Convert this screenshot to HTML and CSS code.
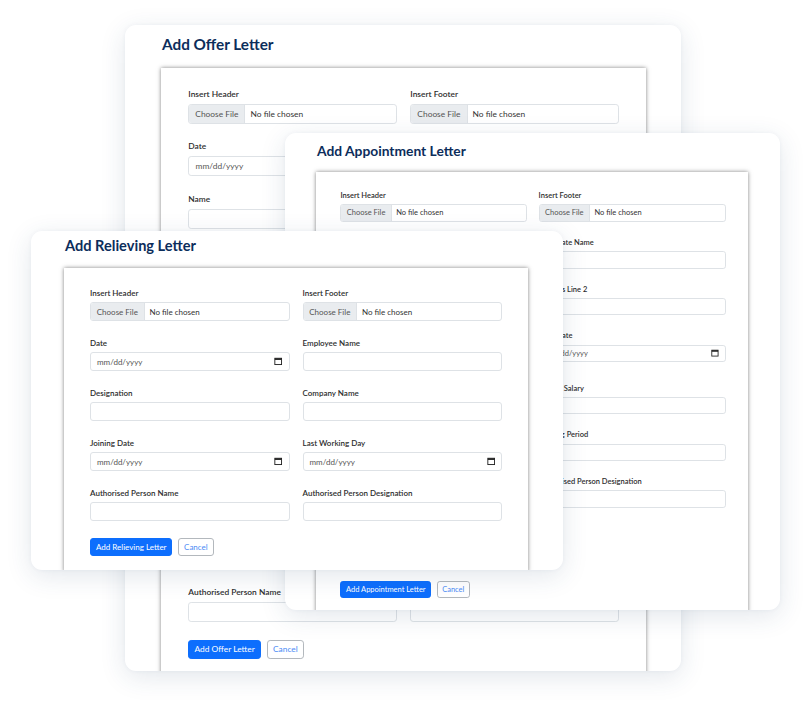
FILE: index.html
```html
<!DOCTYPE html>
<html lang="en">
<head>
<meta charset="utf-8">
<title>Letters</title>
<link rel="stylesheet" href="styles.css">
</head>
<body>
<div class="canvas">

  <section class="card card-offer">
    <h2 class="card-title">Add Offer Letter</h2>
    <div class="sheet">
      <div class="grid">
        <div class="field"><label>Insert Header</label><div class="control file"><span class="file-btn">Choose File</span><span class="file-name">No file chosen</span></div></div>
        <div class="field"><label>Insert Footer</label><div class="control file"><span class="file-btn">Choose File</span><span class="file-name">No file chosen</span></div></div>
        <div class="field"><label>Date</label><div class="control date"><span class="ph">mm/dd/yyyy</span><svg class="cal" viewBox="0 0 10 10"><rect x="1" y="1.5" width="8" height="7.5" fill="none" stroke="#222" stroke-width="1.1"/><rect x="1" y="1.5" width="8" height="2" fill="#222"/></svg></div></div>
        <div class="field"><label>Candidate Name</label><div class="control"></div></div>
        <div class="field"><label>Name</label><div class="control"></div></div>
        <div class="field"><label>Designation</label><div class="control"></div></div>
        <div class="field"><label>Address</label><div class="control area"></div></div>
        <div class="field"><label>Department</label><div class="control"></div></div>
        <div class="field"><label>Joining Date</label><div class="control"></div></div>
        <div class="field"><label>Salary</label><div class="control"></div></div>
        <div class="field"><label>Probation Period</label><div class="control"></div></div>
        <div class="field"><label>Notice Period</label><div class="control"></div></div>
        <div class="field"><label>Working Hours</label><div class="control"></div></div>
        <div class="field"><label>Location</label><div class="control"></div></div>
        <div class="field"><label>Reporting Manager</label><div class="control"></div></div>
        <div class="field"><label>Offer Valid Till</label><div class="control"></div></div>
        <div class="field"><label>Benefits</label><div class="control"></div></div>
        <div class="field"><label>Company Name</label><div class="control"></div></div>
        <div class="field"><label>Authorised Person Name</label><div class="control"></div></div>
        <div class="field"><label>Authorised Person Designation</label><div class="control"></div></div>
      </div>
      <div class="actions"><button class="btn btn-primary">Add Offer Letter</button><button class="btn btn-cancel">Cancel</button></div>
    </div>
  </section>

  <section class="card card-appoint">
    <h2 class="card-title">Add Appointment Letter</h2>
    <div class="sheet">
      <div class="grid">
        <div class="field"><label>Insert Header</label><div class="control file"><span class="file-btn">Choose File</span><span class="file-name">No file chosen</span></div></div>
        <div class="field"><label>Insert Footer</label><div class="control file"><span class="file-btn">Choose File</span><span class="file-name">No file chosen</span></div></div>
        <div class="field"><label>Date</label><div class="control"></div></div>
        <div class="field"><label>Candidate Name</label><div class="control"></div></div>
        <div class="field"><label>Address Line 1</label><div class="control"></div></div>
        <div class="field"><label>Address Line 2</label><div class="control"></div></div>
        <div class="field field-tall"><label>Designation</label><div class="control"></div></div>
        <div class="field"><label>Start Date</label><div class="control date"><span class="ph">mm/dd/yyyy</span><svg class="cal" viewBox="0 0 10 10"><rect x="1" y="1.5" width="8" height="7.5" fill="none" stroke="#222" stroke-width="1.1"/><rect x="1" y="1.5" width="8" height="2" fill="#222"/></svg></div></div>
        <div class="field"><label>Department</label><div class="control"></div></div>
        <div class="field"><label>Annual Salary</label><div class="control"></div></div>
        <div class="field"><label>Working Hours</label><div class="control"></div></div>
        <div class="field"><label>Training Period</label><div class="control"></div></div>
        <div class="field"><label>Authorised Person Name</label><div class="control"></div></div>
        <div class="field"><label>Authorised Person Designation</label><div class="control"></div></div>
        <div class="field"><label>Reporting Manager</label><div class="control"></div></div>
      </div>
      <div class="actions"><button class="btn btn-primary">Add Appointment Letter</button><button class="btn btn-cancel">Cancel</button></div>
    </div>
  </section>

  <section class="card card-relieve">
    <h2 class="card-title">Add Relieving Letter</h2>
    <div class="sheet">
      <div class="grid">
        <div class="field"><label>Insert Header</label><div class="control file"><span class="file-btn">Choose File</span><span class="file-name">No file chosen</span></div></div>
        <div class="field"><label>Insert Footer</label><div class="control file"><span class="file-btn">Choose File</span><span class="file-name">No file chosen</span></div></div>
        <div class="field"><label>Date</label><div class="control date"><span class="ph">mm/dd/yyyy</span><svg class="cal" viewBox="0 0 10 10"><rect x="1" y="1.5" width="8" height="7.5" fill="none" stroke="#222" stroke-width="1.1"/><rect x="1" y="1.5" width="8" height="2" fill="#222"/></svg></div></div>
        <div class="field"><label>Employee Name</label><div class="control"></div></div>
        <div class="field"><label>Designation</label><div class="control"></div></div>
        <div class="field"><label>Company Name</label><div class="control"></div></div>
        <div class="field"><label>Joining Date</label><div class="control date"><span class="ph">mm/dd/yyyy</span><svg class="cal" viewBox="0 0 10 10"><rect x="1" y="1.5" width="8" height="7.5" fill="none" stroke="#222" stroke-width="1.1"/><rect x="1" y="1.5" width="8" height="2" fill="#222"/></svg></div></div>
        <div class="field"><label>Last Working Day</label><div class="control date"><span class="ph">mm/dd/yyyy</span><svg class="cal" viewBox="0 0 10 10"><rect x="1" y="1.5" width="8" height="7.5" fill="none" stroke="#222" stroke-width="1.1"/><rect x="1" y="1.5" width="8" height="2" fill="#222"/></svg></div></div>
        <div class="field"><label>Authorised Person Name</label><div class="control"></div></div>
        <div class="field"><label>Authorised Person Designation</label><div class="control"></div></div>
      </div>
      <div class="actions"><button class="btn btn-primary">Add Relieving Letter</button><button class="btn btn-cancel">Cancel</button></div>
    </div>
  </section>

</div>
</body>
</html>
```
FILE: styles.css
```css
html, body {
  margin: 0;
  padding: 0;
  background: #ffffff;
}

body {
  font-family: Lato, "Noto Sans", sans-serif;
  color: #333;
}

.canvas {
  position: relative;
  width: 811px;
  height: 707px;
  overflow: hidden;
}

.card {
  position: absolute;
  display: flex;
  flex-direction: column;
  background: #fff;
  border-radius: 11px;
  box-shadow: 0 6px 26px rgba(40, 70, 110, 0.13), 0 0 4px rgba(40, 70, 110, 0.05);
  overflow: hidden;
  font-size: 8px;
}

.card-title {
  margin: 0;
  font-weight: 700;
  color: #0c2d5b;
  line-height: 20px;
  white-space: nowrap;
}

.sheet {
  flex: 1;
  background: #fff;
  box-shadow: 0 0 4px rgba(0, 0, 0, 0.5);
  padding: 2.5em 3.25em 2em;
}

.grid {
  display: grid;
  grid-template-columns: 1fr 1fr;
  column-gap: 1.625em;
  row-gap: 2.125em;
}

.field label {
  display: block;
  font-size: 1em;
  line-height: 1.25em;
  font-weight: 600;
  color: #2d2d2d;
  margin-bottom: 0.5em;
  white-space: nowrap;
}

.control {
  height: 2.375em;
  box-sizing: border-box;
  border: 1px solid #dee2e6;
  border-radius: 0.375em;
  background: #fff;
  display: flex;
  align-items: center;
  overflow: hidden;
}

.control.area {
  height: 5.5em;
}

.file-btn {
  align-self: stretch;
  display: flex;
  align-items: center;
  padding: 0 0.72em;
  background: #e9ecef;
  border-right: 1px solid #dee2e6;
  color: #555;
  white-space: nowrap;
}

.file-name {
  padding-left: 0.6em;
  color: #333;
  white-space: nowrap;
}

.date {
  justify-content: space-between;
  padding: 0 0.75em;
}

.ph {
  color: #555;
}

.cal {
  width: 1.05em;
  height: 1.05em;
}

.actions {
  display: flex;
  gap: 0.7em;
  margin-top: 2.125em;
}

.btn {
  font-family: inherit;
  font-size: 1em;
  height: 2.25em;
  padding: 0 0.62em;
  border-radius: 0.375em;
  box-sizing: border-box;
  cursor: pointer;
  white-space: nowrap;
}

.btn-primary {
  background: #0d6efd;
  border: 1px solid #0d6efd;
  color: #fff;
}

.btn-cancel {
  background: #fff;
  border: 1px solid #b3b8bd;
  color: #4b8bf5;
}

/* Offer letter card (back) */
.card-offer {
  left: 125px;
  top: 25px;
  width: 556px;
  height: 646px;
  font-size: 8.4px;
}
.card-offer .card-title {
  font-size: 15.3px;
  padding: 9px 0 0 37px;
}
.card-offer .sheet {
  margin: 14px 0 0 36px;
  width: 485px;
  box-sizing: border-box;
}

/* Appointment letter card (middle) */
.card-appoint {
  left: 285px;
  top: 133px;
  width: 495px;
  height: 477px;
  font-size: 7.5px;
}
.card-appoint .card-title {
  font-size: 13.8px;
  padding: 8px 0 0 32px;
}
.card-appoint .sheet {
  margin: 11px 0 0 31px;
  width: 432px;
  box-sizing: border-box;
  padding-right: 3em;
}
.card-appoint .grid {
  column-gap: 1.5em;
}
.card-appoint .field-tall {
  padding-bottom: 0.7em;
}
.card-appoint .actions {
  margin-top: 3.45em;
}

/* Relieving letter card (front) */
.card-relieve {
  left: 31px;
  top: 231px;
  width: 532px;
  height: 339px;
  font-size: 8px;
}
.card-relieve .card-title {
  font-size: 14.6px;
  padding: 5px 0 0 34px;
}
.card-relieve .sheet {
  margin: 12px 0 0 33px;
  width: 464px;
  box-sizing: border-box;
}
```
